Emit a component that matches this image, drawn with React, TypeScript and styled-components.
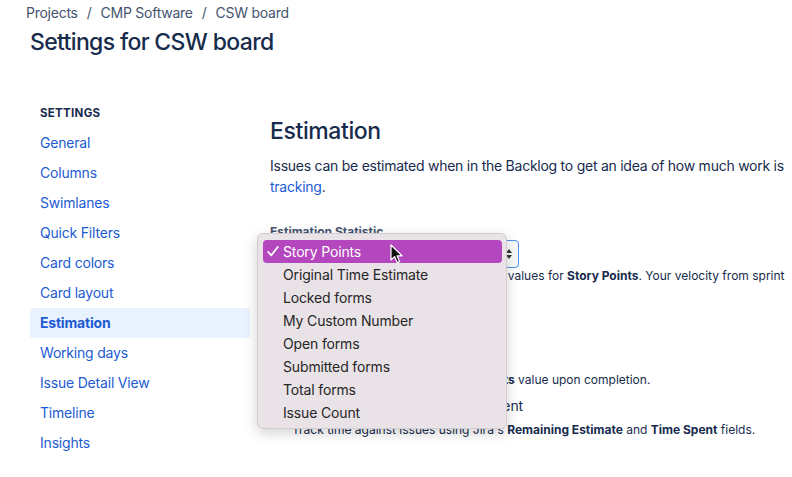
import styled, { createGlobalStyle } from 'styled-components'

const GlobalStyle = createGlobalStyle`
  html, body {
    margin: 0;
    padding: 0;
    background: #ffffff;
    overflow: hidden;
  }
  body {
    font-family: Inter, "Noto Sans", "Liberation Sans", sans-serif;
    color: #172b4d;
  }
`

const Page = styled.div`
  width: 792px;
  height: 477px;
  overflow: hidden;
  padding: 3px 0 0 26px;
  box-sizing: border-box;
`

const Breadcrumbs = styled.nav`
  display: flex;
  gap: 9px;
  font-size: 14px;
  line-height: 20px;
  letter-spacing: -0.25px;
  color: #44546f;
`

const Title = styled.h1`
  margin: 5px 0 0 4px;
  font-size: 23px;
  line-height: 28px;
  font-weight: 500;
  letter-spacing: -0.65px;
  color: #172b4d;
`

const Body = styled.div`
  display: flex;
  gap: 20px;
  margin-top: 47px;
  margin-left: 4px;
`

const Sidebar = styled.aside`
  width: 220px;
  flex-shrink: 0;
  display: flex;
  flex-direction: column;
`

const SideHeading = styled.div`
  padding-left: 10px;
  font-size: 11.5px;
  line-height: 20px;
  font-weight: 700;
  letter-spacing: 0.3px;
  margin-bottom: 5px;
  color: #172b4d;
`

const SideItem = styled.a<{ $active?: boolean }>`
  display: block;
  height: 30px;
  line-height: 30px;
  padding-left: 10px;
  font-size: 14px;
  letter-spacing: -0.2px;
  color: #1d5bd2;
  font-weight: ${p => (p.$active ? 700 : 400)};
  background: ${p => (p.$active ? '#e9f2ff' : 'transparent')};
  border-radius: 3px;
  text-decoration: none;
`

const Main = styled.main`
  flex: 1;
  min-width: 0;
  padding-top: 14px;
`

const H2 = styled.h2`
  margin: 0;
  font-size: 23px;
  line-height: 28px;
  font-weight: 500;
  letter-spacing: -0.4px;
  color: #172b4d;
`

const Para = styled.p`
  margin: 10px 0 0;
  font-size: 14px;
  line-height: 21px;
  letter-spacing: -0.25px;
  white-space: nowrap;
  color: #172b4d;
`

const Link = styled.a`
  color: #1d5bd2;
  text-decoration: none;
`

const Label = styled.div`
  margin-top: 27px;
  font-size: 12px;
  line-height: 16px;
  font-weight: 700;
  color: #44546f;
`

const FieldWrap = styled.div`
  position: relative;
  width: 249px;
`

const Select = styled.div`
  height: 28px;
  box-sizing: border-box;
  border: 1px solid #4c8fe8;
  border-radius: 4px;
  background: #fafbfc;
  display: flex;
  align-items: center;
  justify-content: space-between;
  padding: 0 5px 0 8px;
  font-size: 14px;
`

const Help = styled.div<{ $indent?: boolean }>`
  font-size: 12px;
  line-height: 16px;
  white-space: nowrap;
  color: #172b4d;
  padding-left: ${p => (p.$indent ? '22px' : '0')};
  margin-top: ${p => (p.$indent ? '6px' : '0')};
`

const Section = styled.h3`
  margin: 34px 0 0;
  font-size: 16px;
  line-height: 20px;
  font-weight: 600;
`

const Radio = styled.label`
  display: flex;
  align-items: center;
  gap: 7px;
  font-size: 14px;
  line-height: 20px;
  letter-spacing: -0.1px;
  margin-top: 8px;
  white-space: nowrap;
`

const RadioDot = styled.span<{ $on?: boolean }>`
  width: 12px;
  height: 12px;
  border-radius: 50%;
  box-sizing: border-box;
  border: ${p => (p.$on ? '4px solid #0c66e4' : '2px solid #8590a2')};
  background: #fff;
`

const Menu = styled.div`
  position: absolute;
  left: -13px;
  top: -7px;
  width: 250px;
  box-sizing: border-box;
  padding: 6px 4px 4px 5px;
  background: #e9e2e7;
  border: 1px solid #d2ccd1;
  border-radius: 6px;
  box-shadow: 0 4px 14px rgba(0, 0, 0, 0.18);
  z-index: 5;
`

const MenuItem = styled.div<{ $selected?: boolean }>`
  position: relative;
  height: 23px;
  line-height: 23px;
  padding-left: 20px;
  border-radius: 4px;
  font-size: 14px;
  letter-spacing: -0.15px;
  color: ${p => (p.$selected ? '#ffffff' : '#262626')};
  background: ${p => (p.$selected ? '#b446be' : 'transparent')};
`

const Check = styled.svg`
  position: absolute;
  left: 4px;
  top: 6px;
`

const Pointer = styled.svg`
  position: absolute;
  left: 132px;
  top: 10px;
  z-index: 6;
`

const options = [
  'Story Points',
  'Original Time Estimate',
  'Locked forms',
  'My Custom Number',
  'Open forms',
  'Submitted forms',
  'Total forms',
  'Issue Count',
]

const nav = [
  'General',
  'Columns',
  'Swimlanes',
  'Quick Filters',
  'Card colors',
  'Card layout',
  'Estimation',
  'Working days',
  'Issue Detail View',
  'Timeline',
  'Insights',
]

export default function App() {
  return (
    <Page>
      <GlobalStyle />
      <Breadcrumbs>
        <span>Projects</span>
        <span>/</span>
        <span>CMP Software</span>
        <span>/</span>
        <span>CSW board</span>
      </Breadcrumbs>
      <Title>Settings for CSW board</Title>

      <Body>
        <Sidebar>
          <SideHeading>SETTINGS</SideHeading>
          {nav.map(n => (
            <SideItem key={n} $active={n === 'Estimation'}>
              {n}
            </SideItem>
          ))}
        </Sidebar>

        <Main>
          <H2>Estimation</H2>
          <Para>
            Issues can be estimated when in the Backlog to get an idea of how much work is
            <br />
            <Link>tracking</Link>.
          </Para>

          <Label>Estimation Statistic</Label>
          <FieldWrap>
            <Select>
              <span>Story Points</span>
              <svg width="8" height="12" viewBox="0 0 8 12">
                <path d="M4 1 L7 5 H1 Z" fill="#333" />
                <path d="M4 11 L7 7 H1 Z" fill="#333" />
              </svg>
            </Select>
            <Menu>
              {options.map((o, i) => (
                <MenuItem key={o} $selected={i === 0}>
                  {i === 0 && (
                    <Check width="12" height="11" viewBox="0 0 12 11">
                      <path
                        d="M1.2 6 L4.2 9.4 L10.8 1"
                        fill="none"
                        stroke="#fff"
                        strokeWidth="1.8"
                        strokeLinecap="round"
                        strokeLinejoin="round"
                      />
                    </Check>
                  )}
                  {o}
                </MenuItem>
              ))}
              <Pointer width="13" height="20" viewBox="0 0 13 20">
                <path
                  d="M1 1 L1 16 L4.6 12.6 L7.2 18.6 L9.6 17.6 L7.1 11.8 L12 11.8 Z"
                  fill="#111"
                  stroke="#fff"
                  strokeWidth="1.2"
                  strokeLinejoin="round"
                />
              </Pointer>
            </Menu>
          </FieldWrap>
          <Help>
            Estimate the team's issues using numeric values for <b>Story Points</b>. Your velocity from sprint
          </Help>

          <Section>Time Tracking</Section>
          <Radio>
            <RadioDot $on />
            None
          </Radio>
          <Help $indent>
            Burndown is based on the <b>Story Points</b> value upon completion.
          </Help>
          <Radio>
            <RadioDot />
            Remaining Estimate and Time Spent
          </Radio>
          <Help $indent>
            Track time against issues using Jira's <b>Remaining Estimate</b> and <b>Time Spent</b> fields.
          </Help>
        </Main>
      </Body>
    </Page>
  )
}
